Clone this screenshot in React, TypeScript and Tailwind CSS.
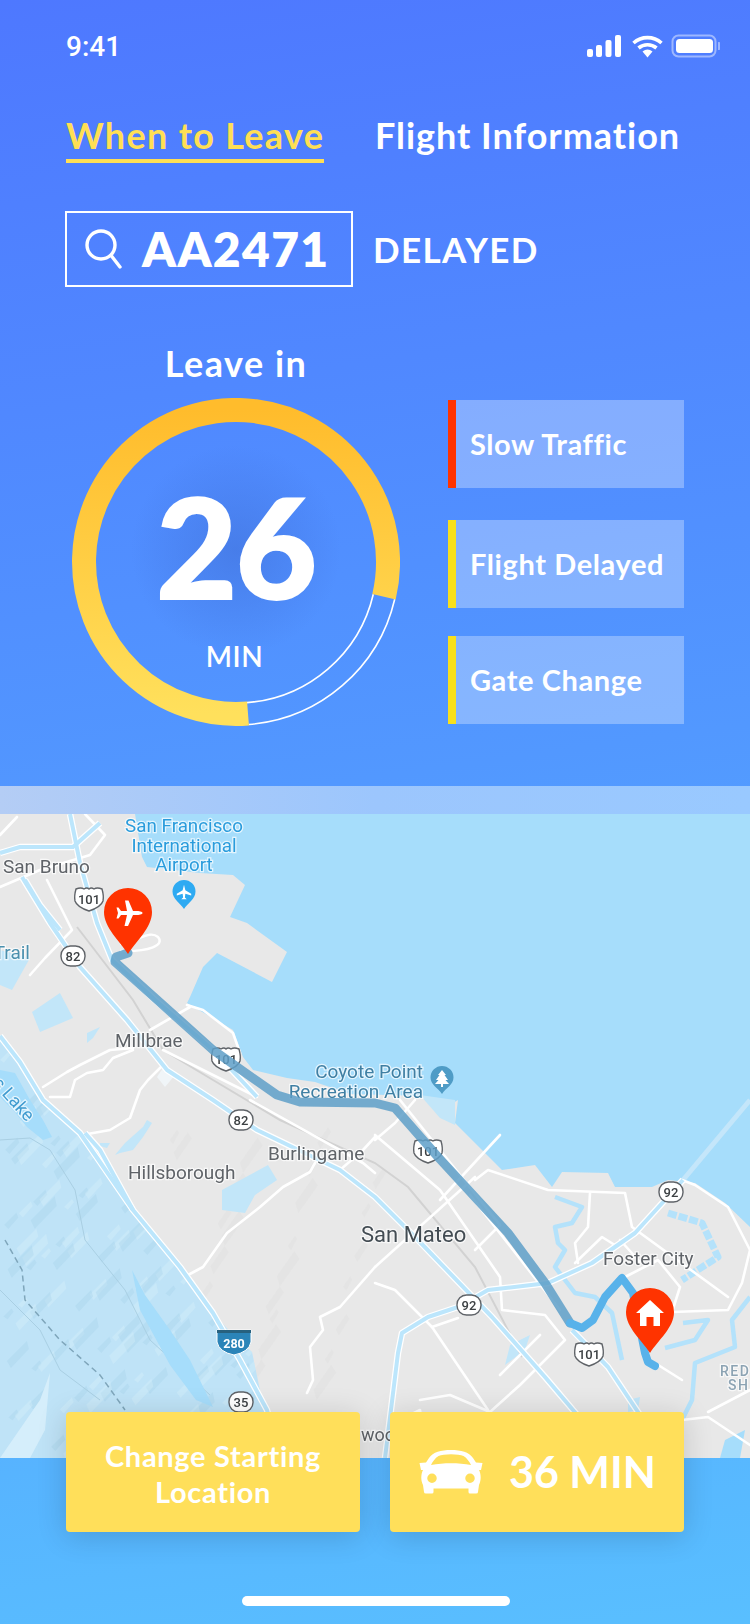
const UI = { fontFamily: '"Lato", "Noto Sans", sans-serif' };
const ROBOTO = '"Roboto", sans-serif';

const HILLS =
  "0,1036 20,1062 43,1100 80,1133 105,1172 133,1210 160,1240 187,1273 213,1313 233,1335 252,1352 262,1400 272,1458 0,1458";

const LAND =
  "0,814 135,814 142,857 147,867 200,873 233,875 245,885 230,917 247,923 287,952 272,982 217,953 203,967 190,997 187,1003 233,1030 243,1057 253,1070 287,1078 315,1082 350,1094 425,1096 450,1105 458,1100 455,1123 495,1163 502,1170 535,1165 552,1187 562,1172 608,1173 615,1187 652,1187 668,1180 695,1183 725,1203 750,1227 750,1458 0,1458";

const HIGHWAYS = [
  "70,814 80,863 97,923 112,960 155,1000 213,1050 257,1097",
  "22,877 50,923 80,967 127,1020 167,1070 213,1100 257,1130 340,1170 375,1197 418,1240 492,1317 545,1377 590,1430",
  "0,1036 20,1062 43,1100 80,1133 133,1210 180,1267 213,1313 240,1360 267,1410 280,1458",
  "85,1133 100,1150 133,1210",
  "385,1458 398,1353 402,1333 428,1317 458,1307 488,1290 548,1283 592,1263 635,1233 665,1200 683,1180",
  "572,1330 608,1367 650,1430 665,1458",
  "0,853 20,847 47,847 73,847 100,823",
  "25,880 40,905 60,930",
];

const ROADS = [
  "0,887 40,870 90,855 105,835 85,814",
  "17,817 0,835",
  "47,880 72,930 45,958 30,975",
  "43,1087 67,1072 80,1065 110,1050 133,1048",
  "50,1097 70,1097 75,1080 87,1073 103,1070 113,1058 133,1050",
  "82,1135 110,1130 130,1118 140,1090 148,1080 163,1065",
  "187,1005 203,1010 233,1033 240,1053",
  "150,1030 190,1007",
  "163,1050 257,1097",
  "188,1275 203,1267 227,1233 260,1207 283,1187 310,1172 315,1163",
  "250,1100 363,1163 375,1173",
  "375,1137 363,1150 340,1170",
  "375,1267 340,1307 320,1317 323,1330 310,1347 313,1380 307,1393",
  "375,1140 395,1123 415,1100",
  "475,1180 488,1170 548,1190 625,1193 632,1227 728,1297",
  "682,1180 695,1185 728,1207 750,1250 742,1283 728,1310 672,1312",
  "590,1193 588,1227 575,1243 578,1263",
  "375,1135 440,1190 500,1277 502,1310 545,1315 565,1340 520,1385 490,1412",
  "475,1177 375,1267",
  "375,1283 395,1290 432,1327 488,1410",
  "432,1327 458,1318",
  "575,1263 602,1237 618,1247 638,1233",
  "625,1277 658,1260 680,1287 672,1312",
  "655,1363 682,1380",
  "682,1420 708,1417 750,1445",
  "750,1390 708,1412",
  "420,1400 450,1395 490,1412",
  "400,1420 420,1410 428,1458",
  "440,1200 500,1135",
  "400,1100 500,1225",
  "470,1195 560,1310",
  "500,1225 475,1250",
  "540,1335 500,1375",
  "620,1240 640,1262",
];

const CHANNELS = [
  "555,1197 582,1207 572,1223 555,1227 558,1243 565,1250 555,1267 575,1293 595,1297 612,1313 622,1360",
  "683,1323 708,1320 695,1340 665,1348",
  "750,1297 732,1320 735,1347 695,1363 692,1400 682,1420",
  "668,1213 702,1223 718,1257 682,1280",
];

const PONDS = [
  "115,1155 125,1143 143,1127 147,1120 152,1123 143,1137 133,1150 120,1153",
  "100,1143 110,1143 107,1148 100,1146",
  "222,1190 268,1165 277,1180 255,1195 245,1213 222,1210",
  "0,950 30,958 12,990 0,985",
  "32,1012 60,993 73,1018 40,1032",
  "87,1033 100,1027 93,1038 87,1043",
  "510,1345 530,1335 525,1350 505,1365",
  "628,1400 640,1397 638,1410 628,1412",
  "420,1095 455,1100 455,1125 440,1118",
];

const LAKES = [
  "0,1070 15,1073 30,1100 43,1120 52,1137 43,1140 27,1127 13,1110 0,1097",
  "132,1270 145,1295 170,1330 190,1360 213,1407 196,1400 170,1365 140,1310",
  "725,1440 745,1430 740,1458 720,1458",
];

const RIDGES = Array.from({ length: 170 }, (_, i) => {
  const x = (i * 37.3 + (i % 7) * 19) % 250;
  const y = 1060 + ((i * 61.7 + (i % 5) * 31) % 395);
  const s = 8 + (i % 5) * 4;
  return {
    points: `${x},${y} ${x + s},${y - s} ${x + s + 2},${y - s * 0.6} ${x + 4},${y + s * 0.35}`,
    fill: i % 2 === 0 ? "#dff3fd" : "#9fcde6",
  };
});

const GREY_RIDGES = Array.from({ length: 26 }, (_, i) => {
  const x = 170 + ((i * 47.9) % 210);
  const y = 1140 + ((i * 83.3) % 260);
  const s = 10 + (i % 4) * 5;
  return `${x},${y} ${x + s * 0.7},${y - s} ${x + s * 0.9},${y - s * 0.7} ${x + 3},${y + s * 0.4}`;
});

function Shield({ x, y, t = "101" }: { x: number; y: number; t?: string }) {
  return (
    <g transform={`translate(${x} ${y})`}>
      <path
        d="M-13 -10 Q-8 -12 -5 -10 Q-2 -12 0 -10 Q2 -12 5 -10 Q8 -12 13 -10 Q15 -3 14 2 Q12 8 0 12 Q-12 8 -14 2 Q-15 -3 -13 -10 Z"
        fill="#fff"
        stroke="#5f6368"
        strokeWidth="1.4"
      />
      <text x="0" y="4.5" textAnchor="middle" fontFamily={ROBOTO} fontSize="13" fontWeight="500" fill="#3c4043">
        {t}
      </text>
    </g>
  );
}

function Badge({ x, y, t }: { x: number; y: number; t: string }) {
  return (
    <g transform={`translate(${x} ${y})`}>
      <rect x="-12" y="-10" width="24" height="20" rx="9.5" fill="#fff" stroke="#5f6368" strokeWidth="1.4" />
      <text x="0" y="4.5" textAnchor="middle" fontFamily={ROBOTO} fontSize="13" fontWeight="500" fill="#3c4043">
        {t}
      </text>
    </g>
  );
}

function Label({
  x,
  y,
  t,
  c,
  size = 19,
  anchor = "start",
  spacing,
  weight = 400,
  extra,
}: {
  x: number;
  y: number;
  t: string;
  c: string;
  size?: number;
  anchor?: "start" | "middle" | "end";
  spacing?: number;
  weight?: number;
  extra?: string;
}) {
  return (
    <text
      x={x}
      y={y}
      textAnchor={anchor}
      fontFamily={ROBOTO}
      fontSize={size}
      fontWeight={weight}
      fill={c}
      stroke="#ffffff"
      strokeOpacity="0.7"
      strokeWidth="2.5"
      paintOrder="stroke"
      letterSpacing={spacing}
      transform={extra}
    >
      {t}
    </text>
  );
}

function Pin({ cx, top, tip, r, fill }: { cx: number; top: number; tip: number; r: number; fill: string }) {
  const cy = top + r;
  return (
    <path
      d={`M${cx} ${tip} C${cx - r * 0.35} ${tip - r * 0.55} ${cx - r} ${cy + r * 0.65} ${cx - r} ${cy} A${r} ${r} 0 1 1 ${cx + r} ${cy} C${cx + r} ${cy + r * 0.65} ${cx + r * 0.35} ${tip - r * 0.55} ${cx} ${tip} Z`}
      fill={fill}
    />
  );
}

function MapDrawing() {
  return (
    <svg viewBox="0 814 750 644" width="750" height="644" className="block">
      <defs>
        <clipPath id="hills">
          <polygon points={HILLS} />
        </clipPath>
      </defs>
      <g className="blur-[0.6px]">
        <rect x="0" y="814" width="750" height="644" fill="#a6ddfb" />
        <polygon points={LAND} fill="#e8e8e8" />
        {GREY_RIDGES.map((p, i) => (
          <polygon key={i} points={p} fill="#dedede" opacity="0.4" />
        ))}
        <polygon points={HILLS} fill="#bfe3f7" />
        <g clipPath="url(#hills)">
          {RIDGES.map((r, i) => (
            <polygon key={i} points={r.points} fill={r.fill} opacity="0.28" />
          ))}
        </g>
        <polyline
          points="5,1240 22,1270 25,1300 60,1340 100,1375 125,1410"
          fill="none"
          stroke="#7fa6bb"
          strokeWidth="1.5"
          strokeDasharray="6 4"
        />
        <polyline points="0,1140 30,1138 50,1150 75,1190 85,1240 125,1290 150,1340 210,1395" fill="none" stroke="#a9cfe3" strokeWidth="1" />
        <polyline points="0,1290 40,1330 60,1370 100,1400" fill="none" stroke="#a9cfe3" strokeWidth="1" />
        <polygon points="0,1458 40,1400 50,1373 45,1430 30,1458" fill="#d5eefb" />
        {PONDS.map((p, i) => (
          <polygon key={i} points={p} fill="#c2e6f9" />
        ))}
        {LAKES.map((p, i) => (
          <polygon key={i} points={p} fill="#a6ddfb" />
        ))}
        <polygon points="157,1077 165,1065 175,1075 165,1087" fill="#f0f5f8" />
        <polyline points="683,1180 750,1100" fill="none" stroke="#c4e6fa" strokeWidth="5" />
        <polyline
          points="77,927 97,953 133,1000 163,1050 213,1080 280,1120 375,1163 408,1187 475,1267 522,1357"
          fill="none"
          stroke="#d2d2d2"
          strokeWidth="2"
        />
        {CHANNELS.map((p, i) => (
          <polyline
            key={i}
            points={p}
            fill="none"
            stroke="#b4e2fb"
            strokeWidth={i === 3 ? 7 : 4.5}
            strokeLinejoin="round"
            strokeDasharray={i === 3 ? "9 2" : undefined}
          />
        ))}
        {ROADS.map((p, i) => (
          <polyline key={i} points={p} fill="none" stroke="#ffffff" strokeWidth="2.6" strokeLinejoin="round" strokeLinecap="round" />
        ))}
        <path d="M120 944 C140 940 150 930 158 937 C165 945 150 952 120 951" fill="none" stroke="#fff" strokeWidth="2.4" />
        {HIGHWAYS.map((p, i) => (
          <polyline key={i} points={p} fill="none" stroke="#ffffff" strokeWidth="6.5" strokeLinejoin="round" />
        ))}
        {HIGHWAYS.map((p, i) => (
          <polyline key={i} points={p} fill="none" stroke="#bce6fc" strokeWidth="4" strokeLinejoin="round" />
        ))}

        <Label x={184} y={832} t="San Francisco" c="#2a9cdc" anchor="middle" size={18.8} />
        <Label x={184} y={852} t="International" c="#2a9cdc" anchor="middle" size={18.8} />
        <Label x={184} y={871} t="Airport" c="#2a9cdc" anchor="middle" size={18.8} />
        <Label x={3} y={873} t="San Bruno" c="#5f6368" />
        <Label x={30} y={959} t="Trail" c="#4a90ae" anchor="end" />
        <Label x={115} y={1047} t="Millbrae" c="#5f6368" />
        <Label x={423} y={1078} t="Coyote Point" c="#3f7fa3" anchor="end" />
        <Label x={423} y={1098} t="Recreation Area" c="#3f7fa3" anchor="end" />
        <Label x={268} y={1160} t="Burlingame" c="#5f6368" />
        <Label x={128} y={1179} t="Hillsborough" c="#5f6368" />
        <Label x={361} y={1242} t="San Mateo" c="#434c53" size={22} />
        <Label x={603} y={1265} t="Foster City" c="#5f6368" />
        <Label x={-8} y={1084} t="s Lake" c="#3f9bd0" size={18} extra="rotate(48 -8 1084)" />
        <Label x={720} y={1376} t="RED" c="#8ca3b3" size={14} spacing={1.5} weight={500} />
        <Label x={728} y={1390} t="SH" c="#8ca3b3" size={14} spacing={1.5} weight={500} />
        <Label x={361} y={1441} t="wood" c="#5f6368" size={18} />

        <Shield x={89} y={899} />
        <Shield x={226} y={1059} />
        <Shield x={428} y={1151} />
        <Shield x={589} y={1354} />
        <Badge x={73} y={956} t="82" />
        <Badge x={241} y={1120} t="82" />
        <Badge x={671} y={1192} t="92" />
        <Badge x={469} y={1305} t="92" />
        <Badge x={241} y={1402} t="35" />
        <g transform="translate(234 1343)">
          <path d="M-17 -13 L17 -13 L17 -1 Q15 9 0 12 Q-15 9 -17 -1 Z" fill="#2b84b8" stroke="#fff" strokeWidth="1" />
          <rect x="-17" y="-13" width="34" height="3" fill="#27617f" />
          <text x="0" y="4.5" textAnchor="middle" fontFamily={ROBOTO} fontSize="12.5" fontWeight="700" fill="#fff">
            280
          </text>
        </g>

        <Pin cx={184} top={880} tip={909} r={11.5} fill="#2eaaf2" />
        <g transform="translate(184 892) scale(0.9)" fill="#fff">
          <path d="M0 -8 L1.5 -2 L8 2 L8 4 L1.5 2 L1 6 L3 8 L-3 8 L-1 6 L-1.5 2 L-8 4 L-8 2 L-1.5 -2 Z" />
        </g>
        <Pin cx={442} top={1066} tip={1094} r={11.5} fill="#4f9cc6" />
        <path d="M442 1070 L446 1075 L444.5 1075 L448 1080 L445.5 1080 L449 1084 L443 1084 L443 1087 L441 1087 L441 1084 L435 1084 L438.5 1080 L436 1080 L439.5 1075 L438 1075 Z" fill="#fff" />

        <polyline
          points="128,953 116,957 115,962 213,1050 277,1095 300,1102 375,1103 395,1108 438,1157 508,1233 545,1283 570,1323"
          fill="none"
          stroke="#5e9fc8"
          strokeOpacity="0.85"
          strokeWidth="9"
          strokeLinejoin="round"
          strokeLinecap="round"
        />
        <polyline
          points="570,1323 582,1328 593,1320 605,1297 622,1278 633,1293 645,1353 648,1362 655,1366"
          fill="none"
          stroke="#58b2ea"
          strokeWidth="8"
          strokeLinejoin="round"
          strokeLinecap="round"
        />
      </g>

      <Pin cx={128} top={888} tip={954} r={24} fill="#ff3300" />
      <path
        d="M142.5 913 C142.5 911.5 139 911 136 911 L133 911 L128.5 900.5 L125 900.5 L127 911 L121 911 L118.5 907.5 L116.5 907.5 L118 913 L116.5 918.5 L118.5 918.5 L121 915 L127 915 L124.5 926 L128 926 L133 915 L136 915 C139 915 142.5 914.5 142.5 913 Z"
        fill="#fff"
      />
      <Pin cx={650} top={1288} tip={1353} r={24} fill="#ff3300" />
      <path d="M650 1300 L664 1313 L660 1313 L660 1326 L653.5 1326 L653.5 1317 L646.5 1317 L646.5 1326 L640 1326 L640 1313 L636 1313 Z" fill="#fff" />
    </svg>
  );
}

function Gauge() {
  return (
    <div className="relative w-[328px] h-[328px]">
      <svg viewBox="72 398 328 328" width="328" height="328" className="block">
        <defs>
          <linearGradient id="ring" x1="0" y1="0" x2="0" y2="1">
            <stop offset="0" stopColor="#ffbc2c" />
            <stop offset="1" stopColor="#ffe05c" />
          </linearGradient>
          <radialGradient id="glow">
            <stop offset="0" stopColor="#3f6fd8" stopOpacity="0.55" />
            <stop offset="1" stopColor="#3f6fd8" stopOpacity="0" />
          </radialGradient>
        </defs>
        <circle cx="236" cy="550" r="105" fill="url(#glow)" />
        <path d="M394.7 599.2 A163 163 0 0 1 248.8 724.5" fill="none" stroke="#ffffff" strokeWidth="1.6" />
        <path d="M373.3 594.2 A141 141 0 0 1 247 702.6" fill="none" stroke="#ffffff" strokeWidth="1.6" />
        <path d="M248 713.5 A152 152 0 1 1 384 596.7" fill="none" stroke="url(#ring)" strokeWidth="24" />
      </svg>
      <div className="absolute left-0 top-[78px] w-[327px] text-center text-white font-extrabold text-[141px] leading-[140px] tracking-[-2px]">
        26
      </div>
      <div className="absolute left-0 top-[238px] w-[325px] text-center text-white font-semibold text-[28px] leading-[40px] tracking-[0.5px]">
        MIN
      </div>
    </div>
  );
}

function Reason({ text, bar, className }: { text: string; bar: string; className: string }) {
  return (
    <div className={`flex h-[88px] w-[236px] items-center bg-white/30 ${className}`}>
      <div className={`h-full w-[8px] ${bar}`} />
      <div className="pl-[14px] text-white font-bold text-[29px] leading-[36px] tracking-[0.6px] whitespace-nowrap">{text}</div>
    </div>
  );
}

export default function App() {
  return (
    <div
      style={UI}
      className="w-[750px] h-[1624px] overflow-hidden flex flex-col bg-[linear-gradient(172deg,#4e78ff_0%,#5298ff_48%,#59bfff_100%)]"
    >
      <div className="h-[115px] shrink-0 flex justify-between pl-[66px] pr-[30px] pt-[30px]">
        <span className="text-white text-[28px] leading-[34px] font-medium [font-family:Roboto,sans-serif]">9:41</span>
        <svg width="133" height="24" viewBox="587 34 133 24" className="mt-[4px]">
          <g fill="#fff">
            <rect x="587" y="49" width="6" height="8" rx="2" />
            <rect x="596" y="45" width="6" height="12" rx="2" />
            <rect x="605.5" y="40" width="6" height="17" rx="2" />
            <rect x="615" y="35" width="6" height="22" rx="2" />
          </g>
          <g fill="none" stroke="#fff" strokeWidth="3.6">
            <path d="M633.5 43 A21 21 0 0 1 661.5 43" />
            <path d="M638.5 48 A14 14 0 0 1 656.5 48" />
          </g>
          <path d="M642.5 51.5 A8 8 0 0 1 652.5 51.5 L647.5 57.5 Z" fill="#fff" />
          <rect x="672.5" y="35.5" width="43" height="21" rx="6" fill="none" stroke="#fff" strokeOpacity="0.45" strokeWidth="2" />
          <rect x="676" y="39" width="37" height="14" rx="3.5" fill="#fff" />
          <path d="M718 42 A4 4 0 0 1 718 50 Z" fill="#fff" fillOpacity="0.45" />
        </svg>
      </div>

      <div className="flex pl-[66px] text-[36px] leading-[40px] font-bold tracking-[1.3px]">
        <div className="h-[48px] w-[258px] border-b-4 border-[#ffdf54] text-[#ffdf54] whitespace-nowrap">When to Leave</div>
        <div className="ml-[51px] text-white whitespace-nowrap tracking-[0.95px]">Flight Information</div>
      </div>

      <div className="mt-[48px] ml-[65px] flex items-center">
        <div className="flex h-[76px] w-[288px] items-center border-2 border-white pl-[18px]">
          <svg width="38" height="40" viewBox="0 0 38 40" fill="none" stroke="#fff" strokeWidth="3.4" strokeLinecap="round">
            <ellipse cx="16" cy="16" rx="14" ry="14" />
            <path d="M26.5 27 L35 38" />
          </svg>
          <span className="ml-[19px] text-white font-extrabold text-[48px] leading-[56px] tracking-[1.3px] whitespace-nowrap">AA2471</span>
        </div>
        <span className="ml-[20px] text-white font-bold text-[35px] leading-[40px] tracking-[1.4px]">DELAYED</span>
      </div>

      <div className="mt-[56px] ml-[72px] flex items-start">
        <div className="w-[328px]">
          <div className="mb-[15px] h-[40px] text-center text-white font-bold text-[36px] leading-[40px] tracking-[1.5px]">Leave in</div>
          <Gauge />
        </div>
        <div className="ml-[48px] mt-[57px] flex flex-col">
          <Reason text="Slow Traffic" bar="bg-[#ff3300]" className="" />
          <Reason text="Flight Delayed" bar="bg-[#f8e01c]" className="mt-[32px]" />
          <Reason text="Gate Change" bar="bg-[#f8e01c]" className="mt-[28px]" />
        </div>
      </div>

      <div className="mt-[60px] h-[28px] shrink-0 bg-[linear-gradient(90deg,#b4cdf5,#9cc6fd_50%,#99c9ff)]" />
      <div className="h-[644px] shrink-0">
        <MapDrawing />
      </div>

      <div className="relative -mt-[46px] flex gap-[30px] pl-[66px]">
        <div className="flex h-[120px] w-[294px] items-center justify-center rounded-[4px] bg-[#ffdf5a] pt-[3px] text-center text-white font-bold text-[29px] leading-[36px] tracking-[0.7px] shadow-[0_4px_30px_rgba(0,0,0,0.16)]">
          Change Starting
          <br />
          Location
        </div>
        <div className="flex h-[120px] w-[294px] items-center rounded-[4px] bg-[#ffdf5a] pl-[29px] text-white font-bold text-[43px] leading-[52px] shadow-[0_4px_30px_rgba(0,0,0,0.16)]">
          <svg width="64" height="44" viewBox="0 0 64 44">
            <path
              fillRule="evenodd"
              fill="#fff"
              d="M32 0 C42 0 50 2 54 8 L57 12.5 L63.5 13 L62 20 L60 20 C62 24 62.5 30 60 35 L59 42 Q59 43.5 57 43.5 L51 43.5 Q49.5 43.5 49.5 42 L49.5 38.5 L14.5 38.5 L14.5 42 Q14.5 43.5 13 43.5 L7 43.5 Q5 43.5 5 42 L4 35 C1.5 30 2 24 4 20 L2 20 L0.5 13 L7 12.5 L10 8 C14 2 22 0 32 0 Z M32 4.3 C27 4.3 22 5 19.5 6 C16 8 13.5 12 12 15 C25 12.6 39 12.6 52 15 C50.5 12 48 8 44.5 6 C42 5 37 4.3 32 4.3 Z M13 23.5 A4.7 4.7 0 1 0 13 33 A4.7 4.7 0 1 0 13 23.5 Z M51 23.5 A4.7 4.7 0 1 0 51 33 A4.7 4.7 0 1 0 51 23.5 Z"
            />
          </svg>
          <span className="ml-[26px] whitespace-nowrap">36 MIN</span>
        </div>
      </div>

      <div className="mt-[64px] ml-[242px] h-[10px] w-[268px] rounded-full bg-white" />
    </div>
  );
}
